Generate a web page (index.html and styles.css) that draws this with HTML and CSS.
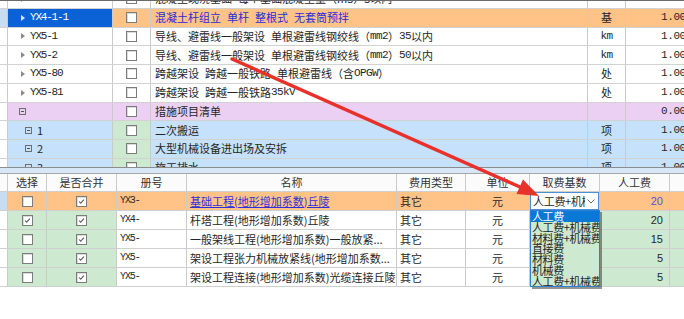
FILE: index.html
```html
<!DOCTYPE html>
<html lang="zh-CN">
<head>
<meta charset="utf-8">
<title>grid</title>
<link rel="stylesheet" href="styles.css">
</head>
<body>
<div class="page">
  <div class="top">
    <div class="trow r0">
      <div class="c stub"></div>
      <div class="c code"><span class="tri"></span><span class="ct">YX5-79</span></div>
      <div class="c chk"><span class="cb"></span></div>
      <div class="c name">混凝土现浇基础 每个基础混凝土量（m3）5以内</div>
      <div class="c unit mono">m3</div>
      <div class="c qty">1.000</div>
    </div>
    <div class="trow sel">
      <div class="c stub stub-sel"></div>
      <div class="c code code-sel"><span class="tri tri-w"></span><span class="ct">YX4-1-1</span></div>
      <div class="c chk"><span class="cb"></span></div>
      <div class="c name blue-t">混凝土杆组立 单杆 整根式 无套筒预拌</div>
      <div class="c unit">基</div>
      <div class="c qty">1.000</div>
    </div>
    <div class="trow">
      <div class="c stub"></div>
      <div class="c code"><span class="tri"></span><span class="ct">YX5-1</span></div>
      <div class="c chk"><span class="cb"></span></div>
      <div class="c name">导线、避雷线一般架设 单根避雷线钢绞线（<span class="m">mm2</span>）<span class="m">35</span>以内</div>
      <div class="c unit mono">km</div>
      <div class="c qty">1.000</div>
    </div>
    <div class="trow">
      <div class="c stub"></div>
      <div class="c code"><span class="tri"></span><span class="ct">YX5-2</span></div>
      <div class="c chk"><span class="cb"></span></div>
      <div class="c name">导线、避雷线一般架设 单根避雷线钢绞线（<span class="m">mm2</span>）<span class="m">50</span>以内</div>
      <div class="c unit mono">km</div>
      <div class="c qty">1.000</div>
    </div>
    <div class="trow">
      <div class="c stub"></div>
      <div class="c code"><span class="tri"></span><span class="ct">YX5-80</span></div>
      <div class="c chk"><span class="cb"></span></div>
      <div class="c name">跨越架设 跨越一般铁路 单根避雷线（含 <span class="m">OPGW</span>）</div>
      <div class="c unit">处</div>
      <div class="c qty">1.000</div>
    </div>
    <div class="trow">
      <div class="c stub"></div>
      <div class="c code"><span class="tri"></span><span class="ct">YX5-81</span></div>
      <div class="c chk"><span class="cb"></span></div>
      <div class="c name">跨越架设 跨越一般铁路 <span class="m">35kV</span></div>
      <div class="c unit">处</div>
      <div class="c qty">1.000</div>
    </div>
    <div class="trow pink">
      <div class="c stub"></div>
      <div class="c code"><span class="box box-l0"></span></div>
      <div class="c chk"><span class="cb"></span></div>
      <div class="c name">措施项目清单</div>
      <div class="c unit"></div>
      <div class="c qty">0.000</div>
    </div>
    <div class="trow lblue">
      <div class="c stub"></div>
      <div class="c code"><span class="box box-l1"></span><span class="num">1</span></div>
      <div class="c chk green"><span class="cb"></span></div>
      <div class="c name">二次搬运</div>
      <div class="c unit">项</div>
      <div class="c qty">1.000</div>
    </div>
    <div class="trow lblue">
      <div class="c stub"></div>
      <div class="c code"><span class="box box-l1"></span><span class="num">2</span></div>
      <div class="c chk green"><span class="cb"></span></div>
      <div class="c name">大型机械设备进出场及安拆</div>
      <div class="c unit">项</div>
      <div class="c qty">1.000</div>
    </div>
    <div class="trow lblue">
      <div class="c stub"></div>
      <div class="c code"><span class="box box-l1"></span><span class="num">3</span></div>
      <div class="c chk green"><span class="cb"></span></div>
      <div class="c name">施工排水</div>
      <div class="c unit">项</div>
      <div class="c qty">1.000</div>
    </div>
  </div>
  <div class="splitter"></div>
  <div class="bottom">
    <div class="brow head">
      <div class="c stub"></div>
      <div class="c ctr">选择</div>
      <div class="c ctr">是否合并</div>
      <div class="c ctr">册号</div>
      <div class="c ctr">名称</div>
      <div class="c ctr">费用类型</div>
      <div class="c ctr">单位</div>
      <div class="c ctr">取费基数</div>
      <div class="c ctr">人工费</div>
      <div class="c"></div>
    </div>
    <div class="brow orange">
      <div class="c stub stub-sel"></div>
      <div class="c ctr"><span class="cb"></span></div>
      <div class="c ctr"><span class="cb on"><svg viewBox="0 0 11 11"><polyline points="2.5,5.5 4.5,7.6 8.5,3.2"/></svg></span></div>
      <div class="c bcode">YX3-</div>
      <div class="c bname link">基础工程(地形增加系数)丘陵</div>
      <div class="c btxt">其它</div>
      <div class="c ctr">元</div>
      <div class="c basecell">
        <div class="select"><span class="sel-t">人工费+机械费</span><svg class="chev" viewBox="0 0 8 5"><polyline points="0.5,0.5 4,4 7.5,0.5"/></svg></div>
      </div>
      <div class="c money purple">20</div>
      <div class="c"></div>
    </div>
    <div class="brow">
      <div class="c stub"></div>
      <div class="c ctr green"><span class="cb on"><svg viewBox="0 0 11 11"><polyline points="2.5,5.5 4.5,7.6 8.5,3.2"/></svg></span></div>
      <div class="c ctr green"><span class="cb on"><svg viewBox="0 0 11 11"><polyline points="2.5,5.5 4.5,7.6 8.5,3.2"/></svg></span></div>
      <div class="c bcode">YX4-</div>
      <div class="c bname">杆塔工程(地形增加系数)丘陵</div>
      <div class="c btxt">其它</div>
      <div class="c ctr">元</div>
      <div class="c green"></div>
      <div class="c money green">20</div>
      <div class="c green"></div>
    </div>
    <div class="brow">
      <div class="c stub"></div>
      <div class="c ctr green"><span class="cb"></span></div>
      <div class="c ctr green"><span class="cb on"><svg viewBox="0 0 11 11"><polyline points="2.5,5.5 4.5,7.6 8.5,3.2"/></svg></span></div>
      <div class="c bcode">YX5-</div>
      <div class="c bname">一般架线工程(地形增加系数)一般放紧...</div>
      <div class="c btxt">其它</div>
      <div class="c ctr">元</div>
      <div class="c green"></div>
      <div class="c money green">15</div>
      <div class="c green"></div>
    </div>
    <div class="brow">
      <div class="c stub"></div>
      <div class="c ctr green"><span class="cb"></span></div>
      <div class="c ctr green"><span class="cb on"><svg viewBox="0 0 11 11"><polyline points="2.5,5.5 4.5,7.6 8.5,3.2"/></svg></span></div>
      <div class="c bcode">YX5-</div>
      <div class="c bname">架设工程张力机械放紧线(地形增加系数...</div>
      <div class="c btxt">其它</div>
      <div class="c ctr">元</div>
      <div class="c green"></div>
      <div class="c money green">5</div>
      <div class="c green"></div>
    </div>
    <div class="brow">
      <div class="c stub"></div>
      <div class="c ctr green"><span class="cb"></span></div>
      <div class="c ctr green"><span class="cb on"><svg viewBox="0 0 11 11"><polyline points="2.5,5.5 4.5,7.6 8.5,3.2"/></svg></span></div>
      <div class="c bcode">YX5-</div>
      <div class="c bname">架设工程连接(地形增加系数)光缆连接丘陵</div>
      <div class="c btxt">其它</div>
      <div class="c ctr">元</div>
      <div class="c green"></div>
      <div class="c money green">5</div>
      <div class="c green"></div>
    </div>
  </div>

  <div class="dd-list">
    <div class="dd-item dd-on">人工费</div>
    <div class="dd-item">人工费+机械费</div>
    <div class="dd-item">材料费+机械费</div>
    <div class="dd-item">直接费</div>
    <div class="dd-item">材料费</div>
    <div class="dd-item">机械费</div>
    <div class="dd-item">人工费+机械费</div>
  </div>

  <svg class="arrow" viewBox="0 0 684 319" width="684" height="319">
    <line x1="232" y1="59" x2="520" y2="187" stroke="#e8312b" stroke-width="3.4" stroke-linecap="round"/>
    <polygon points="539,196 516.5,194 523,179.5" fill="#e8312b"/>
  </svg>
</div>
</body>
</html>
```

FILE: styles.css
```css
* { box-sizing: border-box; }
html, body { margin: 0; padding: 0; }
body {
  width: 684px;
  height: 319px;
  overflow: hidden;
  background: #ffffff;
  font-family: "Noto Sans CJK SC", "Noto Sans", sans-serif;
  font-size: 11px;
  color: #262626;
}
.page {
  position: relative;
  width: 684px;
  height: 319px;
  overflow: hidden;
}

/* ---------- top grid ---------- */
.top {
  height: 168px;
  overflow: hidden;
  border-top: 1px solid #6a6a6a;
  border-bottom: 1px solid #8c8c8c;
}
.trow {
  display: grid;
  grid-template-columns: 8px 105px 38px 437px 38px 70px;
  width: 696px;
  height: 18.75px;
  border-bottom: 1px solid #d2d2d2;
  background: #ffffff;
}
.trow.r0 { margin-top: -11px; }
.c {
  display: flex;
  align-items: center;
  overflow: hidden;
  white-space: nowrap;
  border-right: 1px solid #cacaca;
  line-height: 1;
}
.stub { background: #ffffff; }
.stub-sel { background: #c9ddf2; }
.code { padding-left: 13px; }
.code-sel { background: #0b62d6; color: #ffffff; }
.tri {
  width: 0; height: 0;
  border-left: 4px solid #8a8a8a;
  border-top: 3px solid transparent;
  border-bottom: 3px solid transparent;
  margin-right: 5px;
}
.tri-w { border-left-color: #d8e6ff; }
.ct {
  font-family: "Liberation Mono", monospace;
  font-size: 11px;
  letter-spacing: -1.2px;
}
.mono, .m { font-family: "Liberation Mono", monospace; letter-spacing: -0.6px; }
.chk { justify-content: center; }
.name { padding-left: 4px; word-spacing: 3.5px; }
.blue-t { color: #2a2ad8; }
.unit { justify-content: center; }
.qty {
  justify-content: flex-end;
  padding-right: 3px;
  font-family: "Liberation Mono", monospace;
  font-size: 11px;
  letter-spacing: -0.4px;
}
.sel { background: #ffc387; }
.sel .chk, .sel .name, .sel .unit, .sel .qty { background: #ffc387; }
.pink { background: #ecd0f4; }
.pink .stub { background: #ffffff; }
.lblue { background: #c5e1fb; }
.lblue .stub { background: #ffffff; }
.green { background: #cde9cf; }
.box {
  width: 7px; height: 7px;
  border: 1px solid #6e6e6e;
  position: relative;
  flex: none;
}
.box::after {
  content: "";
  position: absolute;
  left: 1px; right: 1px; top: 2px;
  height: 1px;
  background: #555555;
}
.box-l0 { margin-left: -2px; }
.box-l1 { margin-left: 4px; margin-right: 5px; }
.num { font-size: 11px; }

.cb {
  width: 11px; height: 11px;
  border: 1px solid #7c7c7c;
  background: #ffffff;
  box-shadow: inset 1px 1px 0 #dcdcdc;
  display: inline-flex;
  flex: none;
}
.cb svg { width: 9px; height: 9px; }
.cb polyline { fill: none; stroke: #5a5a5a; stroke-width: 1.3; }

/* ---------- splitter ---------- */
.splitter {
  height: 5px;
  background: #d7e7f7;
}

/* ---------- bottom grid ---------- */
.bottom { border-top: 1px solid #a6a6a6; }
.brow {
  display: grid;
  grid-template-columns: 8px 39px 70px 70px 210px 69px 64px 70px 70px 20px;
  width: 690px;
  height: 19px;
  border-bottom: 1px solid #cfcfcf;
  background: #ffffff;
}
.brow.head { height: 18px; background: #fbfbfb; color: #333333; }
.brow.head .stub { background: #fbfbfb; }
.ctr { justify-content: center; }
.orange, .orange .stub { background: #ffc387; }
.orange .stub-sel { background: #c9ddf2; }
.bcode {
  padding-left: 3px;
  font-family: "Liberation Mono", monospace;
  font-size: 10px;
  letter-spacing: -1.1px;
}
.bname { padding-left: 3px; }
.link { color: #2f2fdc; text-decoration: underline; text-underline-offset: 1px; }
.btxt { padding-left: 3px; }
.money { justify-content: flex-end; padding-right: 6px; font-family: "Liberation Sans", sans-serif; font-size: 11px; }
.purple { color: #5a4ee0; }
.basecell { padding: 0; }
.select {
  width: 100%;
  height: 100%;
  background: #ffffff;
  border: 1px solid #4a8fd8;
  display: flex;
  align-items: center;
  padding-left: 2px;
  padding-right: 3px;
}
.sel-t { flex: 1; overflow: hidden; white-space: nowrap; font-size: 11px; letter-spacing: -0.3px; }
.chev { width: 8px; height: 5px; flex: none; margin-left: 2px; }
.chev polyline { fill: none; stroke: #666666; stroke-width: 1; }

/* ---------- dropdown list (overlay) ---------- */
.dd-list {
  position: absolute;
  left: 530px;
  top: 210px;
  width: 70px;
  height: 77px;
  background: #cde9cf;
  border: 1px solid #2f7fd0;
  box-shadow: 2px 2px 0 rgba(60, 60, 60, 0.55);
  overflow: hidden;
}
.dd-item {
  height: 10.75px;
  line-height: 10.75px;
  font-size: 11px;
  letter-spacing: -0.4px;
  padding-left: 1px;
  white-space: nowrap;
  color: #1e1e1e;
}
.dd-on { background: #0a78d7; color: #ffffff; }

/* ---------- annotation arrow ---------- */
.arrow {
  position: absolute;
  left: 0;
  top: 0;
  pointer-events: none;
}
```
